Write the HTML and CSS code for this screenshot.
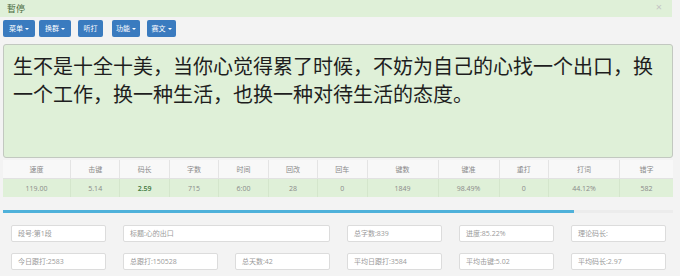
FILE: index.html
```html
<!DOCTYPE html>
<html lang="zh-CN">
<head>
    <meta charset="UTF-8">
    <title>跟打器</title>
    <link rel="stylesheet" href="styles.css">
</head>
<body>

    <!-- 状态提示 -->
    <div class="alert">
        <span>暫停</span>
        <span class="close">×</span>
    </div>

    <!-- 按钮栏 -->
    <div class="toolbar">
        <button class="btn">菜单<span class="caret"></span></button>
        <button class="btn">换群 <span class="caret"></span></button>
        <button class="btn btn-wide">听打</button>
        <button class="btn btn-gap">功能<span class="caret"></span></button>
        <button class="btn">赛文<span class="caret"></span></button>
    </div>

    <!-- 文章区 -->
    <div class="article">生不是十全十美，当你心觉得累了时候，不妨为自己的心找一个出口，换一个工作，换一种生活，也换一种对待生活的态度。</div>

    <!-- 成绩表 -->
    <table class="score">
        <tr>
            <th>速度</th><th>击键</th><th>码长</th><th>字数</th><th>时间</th><th>回改</th>
            <th>回车</th><th>键数</th><th>键准</th><th>重打</th><th>打词</th><th>错字</th>
        </tr>
        <tr class="result">
            <td>119.00</td><td>5.14</td><td class="good">2.59</td><td>715</td><td>6:00</td><td>28</td>
            <td>0</td><td>1849</td><td>98.49%</td><td>0</td><td>44.12%</td><td>582</td>
        </tr>
    </table>

    <!-- 进度条 -->
    <div class="progress">
        <div class="progress-bar" style="width: 85.22%;"></div>
    </div>

    <!-- 统计信息 -->
    <div class="info">
        <div class="field">段号:第1段</div>
        <div class="field span2">标题:心的出口</div>
        <div class="field">总字数:839</div>
        <div class="field">进度:85.22%</div>
        <div class="field">理论码长:</div>
        <div class="field">今日跟打:2583</div>
        <div class="field">总跟打:150528</div>
        <div class="field">总天数:42</div>
        <div class="field">平均日跟打:3584</div>
        <div class="field">平均击键:5.02</div>
        <div class="field">平均码长:2.97</div>
    </div>

</body>
</html>
```

FILE: styles.css
```css
body {
    font-family: 'Open Sans', 'Noto Sans CJK SC', sans-serif;
    margin: 0;
    padding: 0;
    background-color: #f3f3f3;
    width: 680px;
    height: 276px;
    overflow: hidden;
}
.alert {
    display: flex;
    justify-content: space-between;
    align-items: center;
    width: 672px;
    height: 17px;
    box-sizing: border-box;
    padding: 0 10px 0 7px;
    background-color: #dff0d8;
    color: #4a6a40;
    font-size: 9px;
}
.alert .close {
    color: #c4c4c4;
    font-size: 11px;
    margin-top: -5px;
}
.toolbar {
    display: flex;
    padding: 3px 3px 0;
    height: 17px;
}
.btn {
    display: flex;
    align-items: center;
    justify-content: center;
    height: 17px;
    padding: 0 4px;
    margin-right: 4px;
    border: none;
    border-radius: 2px;
    background-color: #3a7bbf;
    color: #fff;
    font-family: inherit;
    font-size: 7px;
    line-height: 1;
}
.btn:nth-child(1) { width: 32px; }
.btn:nth-child(2) { width: 32px; margin-right: 7px; }
.btn-wide { width: 25px; margin-right: 9px; }
.btn-gap { width: 28px; margin-right: 7px; }
.btn:nth-child(5) { width: 29px; }
.caret {
    display: inline-block;
    width: 0;
    height: 0;
    margin-left: 2px;
    border-top: 2px solid #fff;
    border-left: 2px solid transparent;
    border-right: 2px solid transparent;
}
.article {
    margin: 7px 7px 0 3px;
    height: 114px;
    box-sizing: border-box;
    padding: 8px 9px;
    background-color: #dff0d8;
    border: 1px solid #c2c8c0;
    border-radius: 3px;
    font-size: 20px;
    line-height: 28px;
    color: #1e1e1e;
}
.score {
    margin: 2px 0 0 3px;
    width: 670px;
    border-collapse: collapse;
    table-layout: fixed;
    font-size: 7px;
    color: #8a8a8a;
    text-align: center;
}
.score th, .score td {
    height: 18px;
    padding: 0;
    font-weight: normal;
    border-left: 1px solid #e4e4e4;
}
.score th:first-child, .score td:first-child { border-left: none; width: 67px; }
.score th:nth-child(8), .score th:nth-child(11) { width: 70px; }
.score th:nth-child(9) { width: 60px; }
.score th:nth-child(12) { width: 53px; }
.score th {
    background-color: #f8f8f8;
    border-bottom: 1px solid #e2e2e2;
}
.result td {
    background-color: #dff0d8;
    border-left-color: #d4e6cc;
}
.score .good {
    color: #3c763d;
    font-weight: 600;
}
.progress {
    margin: 13px 0 0 3px;
    width: 670px;
    height: 3px;
    background-color: #ececec;
}
.progress-bar {
    height: 3px;
    background-color: #4fb1da;
}
.info {
    display: grid;
    grid-template-columns: repeat(6, 95px);
    column-gap: 17px;
    row-gap: 11px;
    padding: 12px 0 0 11px;
}
.field {
    height: 17px;
    box-sizing: border-box;
    padding: 0 6px;
    background-color: #fff;
    border: 1px solid #dcdcdc;
    border-radius: 2px;
    font-size: 7px;
    line-height: 15px;
    color: #9a9a9a;
}
.span2 {
    grid-column: span 2;
}
.field:nth-child(3) { grid-column: 4; }
```
